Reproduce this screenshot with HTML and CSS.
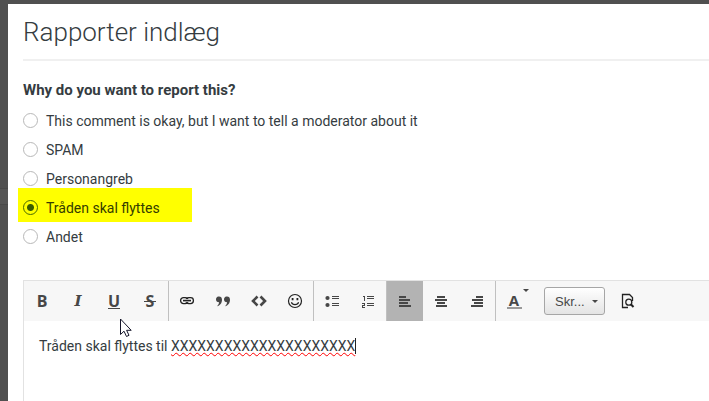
FILE: index.html
```html
<!DOCTYPE html>
<html lang="da">
<head>
  <meta charset="UTF-8">
  <meta name="viewport" content="width=device-width, initial-scale=1.0">
  <title>Rapporter indlæg</title>
  <link rel="stylesheet" href="styles.css">
</head>
<body>
  <main class="modal">
    <h1 class="modal-title">Rapporter indlæg</h1>

    <form class="report-form">
      <fieldset class="reasons">
        <legend>Why do you want to report this?</legend>
        <label class="reason"><input type="radio" name="reason"> This comment is okay, but I want to tell a moderator about it</label>
        <label class="reason"><input type="radio" name="reason"> SPAM</label>
        <label class="reason"><input type="radio" name="reason"> Personangreb</label>
        <label class="reason marked"><input type="radio" name="reason" checked> Tråden skal flyttes</label>
        <label class="reason"><input type="radio" name="reason"> Andet</label>
      </fieldset>

      <div class="editor">
        <div class="toolbar">
          <div class="group">
            <button type="button" class="tool" aria-label="Fed"><span class="letter">B</span></button>
            <button type="button" class="tool" aria-label="Kursiv"><span class="letter italic">I</span></button>
            <button type="button" class="tool" aria-label="Understreget"><span class="letter underline">U</span></button>
            <button type="button" class="tool" aria-label="Gennemstreget"><span class="letter strike">S</span></button>
          </div>
          <div class="group">
            <button type="button" class="tool" aria-label="Link">
              <svg width="16" height="16" viewBox="0 0 16 16" fill="none" stroke="#222" stroke-width="1.3">
                <rect x="1.6" y="4.6" width="7.4" height="6" rx="2.8"/>
                <rect x="7" y="4.6" width="7.400" height="6" rx="2.8"/>
                <path d="M4 7.6h8" stroke="#f7f7f7" stroke-width="3"/>
                <path d="M4 7.6h8" stroke-width="1.6"/>
              </svg>
            </button>
            <button type="button" class="tool" aria-label="Citat">
              <svg width="16" height="16" viewBox="0 0 16 16" fill="#474747">
                <path d="M3.4 3.5C5.7 3.2 7 4.5 7 6.7C7 10 5 12.7 2 13.3C3.3 11.8 4 10.6 4.1 9.2C2.2 9.3 1 8 1 6.4C1 4.9 2 3.6 3.4 3.5Z"/>
                <path d="M11.4 3.5C13.7 3.2 15 4.5 15 6.7C15 10 13 12.7 10 13.3C11.3 11.8 12 10.6 12.1 9.2C10.2 9.3 9 8 9 6.4C9 4.9 10 3.6 11.4 3.5Z"/>
              </svg>
            </button>
            <button type="button" class="tool" aria-label="Kode">
              <svg width="16" height="16" viewBox="0 0 16 16" fill="none" stroke="#474747" stroke-width="2.6">
                <path d="M6.5 3.5L2 8l4.5 4.5M9.5 3.5L14 8l-4.5 4.5"/>
              </svg>
            </button>
            <button type="button" class="tool" aria-label="Humørikon">
              <svg width="16" height="16" viewBox="0 0 16 16" fill="none" stroke="#222" stroke-width="1.2">
                <circle cx="8" cy="8" r="6.5"/>
                <path d="M4.4 9.3c1 3 6.2 3 7.2 0"/>
                <path d="M5.6 5v2.2M10.4 5v2.2" stroke-width="1.8"/>
              </svg>
            </button>
          </div>
          <div class="group">
            <button type="button" class="tool" aria-label="Punktliste">
              <svg width="16" height="16" viewBox="0 0 16 16" fill="#474747" shape-rendering="crispEdges">
                <g shape-rendering="auto"><circle cx="3.5" cy="5" r="2.1"/><circle cx="3.5" cy="12" r="2.1"/></g>
                <path d="M8 3h7v1H8zM8 5h7v1H8zM8 10h7v1H8zM8 12h7v1H8z"/>
              </svg>
            </button>
            <button type="button" class="tool" aria-label="Nummereret liste">
              <svg width="16" height="16" viewBox="0 0 16 16" fill="#474747" shape-rendering="crispEdges">
                <path d="M3 3h2v5H4V4H3z"/>
                <path d="M2 10h3v3H3v1h2v1H2v-3h2v-1H2z"/>
                <path d="M7 3h7v1H7zM7 5h7v1H7zM7 10h7v1H7zM7 12h7v1H7z"/>
              </svg>
            </button>
          </div>
          <div class="group">
            <button type="button" class="tool active" aria-label="Venstrestillet" aria-pressed="true">
              <svg width="16" height="16" viewBox="0 0 16 16" fill="#474747" shape-rendering="crispEdges">
                <path d="M2 3h7v2H2zM2 6h11v2H2zM2 9h9v2H2zM2 12h12v2H2z"/>
              </svg>
            </button>
            <button type="button" class="tool" aria-label="Centreret">
              <svg width="16" height="16" viewBox="0 0 16 16" fill="#474747" shape-rendering="crispEdges">
                <path d="M4 3h8v2H4zM2 6h12v2H2zM4 9h8v2H4zM3 12h11v2H3z"/>
              </svg>
            </button>
            <button type="button" class="tool" aria-label="Højrestillet">
              <svg width="16" height="16" viewBox="0 0 16 16" fill="#474747" shape-rendering="crispEdges">
                <path d="M7 3h7v2H7zM3 6h11v2H3zM5 9h9v2H5zM2 12h12v2H2z"/>
              </svg>
            </button>
          </div>
          <div class="group last">
            <button type="button" class="tool color" aria-label="Tekstfarve">
              <span class="color-letter">A</span>
              <span class="arrow"></span>
            </button>
            <button type="button" class="size-button" aria-label="Skriftstørrelse" aria-haspopup="listbox">Skr... <span class="arrow"></span></button>
            <button type="button" class="tool" aria-label="Vis eksempel">
              <svg width="16" height="16" viewBox="0 0 16 16" fill="none" stroke="#222" stroke-width="1.3">
                <path d="M8 14.5H2.5v-13h7l3 3v3.500"/>
                <circle cx="8.8" cy="9.2" r="3"/>
                <path d="M10.8 11.200l2.700 2.800" stroke-width="2"/>
              </svg>
            </button>
          </div>
        </div>
        <div class="content" contenteditable="true" spellcheck="false" role="textbox" aria-multiline="true" aria-label="Besked">Tråden skal flyttes til <span class="misspelled">XXXXXXXXXXXXXXXXXXXXX</span></div>
      </div>
    </form>
  </main>

  <svg class="cursor" width="14" height="20" viewBox="0 0 14 20" aria-hidden="true">
    <path d="M1.5 1v15.5l3.5-3.3 2.5 5.3 2.500-1.200-2.400-5h4.600z" fill="#fff" stroke="#15152a"/>
  </svg>
</body>
</html>
```
FILE: styles.css
```css
* {
  box-sizing: border-box;
}
body {
  margin: 0;
  min-height: 100vh;
  padding: 4px 0 0 8px;
  display: flex;
  overflow: hidden;
  font-family: Roboto, sans-serif;
  font-size: 14px;
  color: #353c41;
  background: linear-gradient(#505050 188px, #494949 188px, #494949 189px, #555 189px, #555 204px, #494949 204px, #494949 205px, #505050 205px);
}
.modal {
  flex: 1;
  padding-left: 15px;
  background: #fff;
}
.modal-title {
  margin: 0;
  padding: 12px 0 11px;
  border-bottom: 2px solid #f0f0f0;
  font-size: 26px;
  line-height: 32px;
  font-weight: 300;
}
.report-form {
  padding-top: 19px;
}

/* reasons */
.reasons {
  margin: 0;
  padding: 0;
  border: 0;
}
.reasons legend {
  padding: 0;
  margin-bottom: 6px;
  font-size: 15px;
  font-weight: 700;
  line-height: 20px;
}
.reason {
  display: flex;
  align-items: center;
  gap: 8px;
  height: 29px;
}
.reason input {
  appearance: none;
  flex: none;
  width: 15px;
  height: 15px;
  margin: 0;
  border: 1px solid #b8b8b8;
  border-radius: 50%;
  background: #fff;
}
.reason.marked {
  width: 174px;
  height: 34px;
  margin: -5px 0 0 -5px;
  padding: 5px 0 0 5px;
  background: #ff0;
  color: #353c00;
}
.reason input:checked {
  border-color: #4a6a00;
  background: radial-gradient(circle, #3a5c00 3px, #ff0 4px);
}

/* editor */
.editor {
  margin-top: 29px;
  border-top: 1px solid #e2e2e2;
  border-left: 1px solid #e2e2e2;
}
.toolbar {
  display: flex;
  height: 40px;
  background: #f7f7f7;
}
.group {
  display: flex;
  border-right: 1px solid #c0c0c0;
}
.group.last {
  align-items: center;
  border-right: 0;
}
.tool {
  display: flex;
  align-items: center;
  justify-content: center;
  width: 36px;
  height: 40px;
  padding: 0;
  border: 0;
  background: none;
  color: #474747;
}
.tool.active {
  background: #b3b3b3;
}
.letter {
  font: 700 16px/18px "Open Sans", sans-serif;
}
.italic {
  font-family: "DejaVu Serif", serif;
  font-size: 15px;
  font-style: italic;
}
.underline {
  border-bottom: 1px solid #474747;
  line-height: 14px;
}
.strike {
  padding: 0 2px;
  background: linear-gradient(#474747, #474747) center 9px / 100% 1px no-repeat;
}
.arrow {
  border: 3px solid transparent;
  border-top-color: #474747;
  border-bottom: 0;
}
.color {
  position: relative;
}
.color-letter {
  width: 15px;
  border-bottom: 2px solid #999;
  font: 700 15px/14px "Open Sans", sans-serif;
}
.color .arrow {
  position: absolute;
  top: 8px;
  right: 3px;
}
.size-button {
  display: flex;
  align-items: center;
  justify-content: space-between;
  width: 61px;
  height: 28px;
  margin: 0 5px 0 12px;
  padding: 0 6px 0 10px;
  border: 1px solid #a6a6a6;
  border-radius: 3px;
  background: linear-gradient(#fff, #e4e4e4);
  color: #474747;
  font: 13px "Liberation Sans", sans-serif;
}
.content {
  min-height: 80px;
  padding: 15px;
  line-height: 20px;
  outline: 0;
}
.misspelled {
  border-right: 1px solid #222;
  text-decoration: underline wavy #f00 1px;
  text-underline-offset: 1px;
}
.cursor {
  position: absolute;
  left: 119px;
  top: 318px;
}
```
